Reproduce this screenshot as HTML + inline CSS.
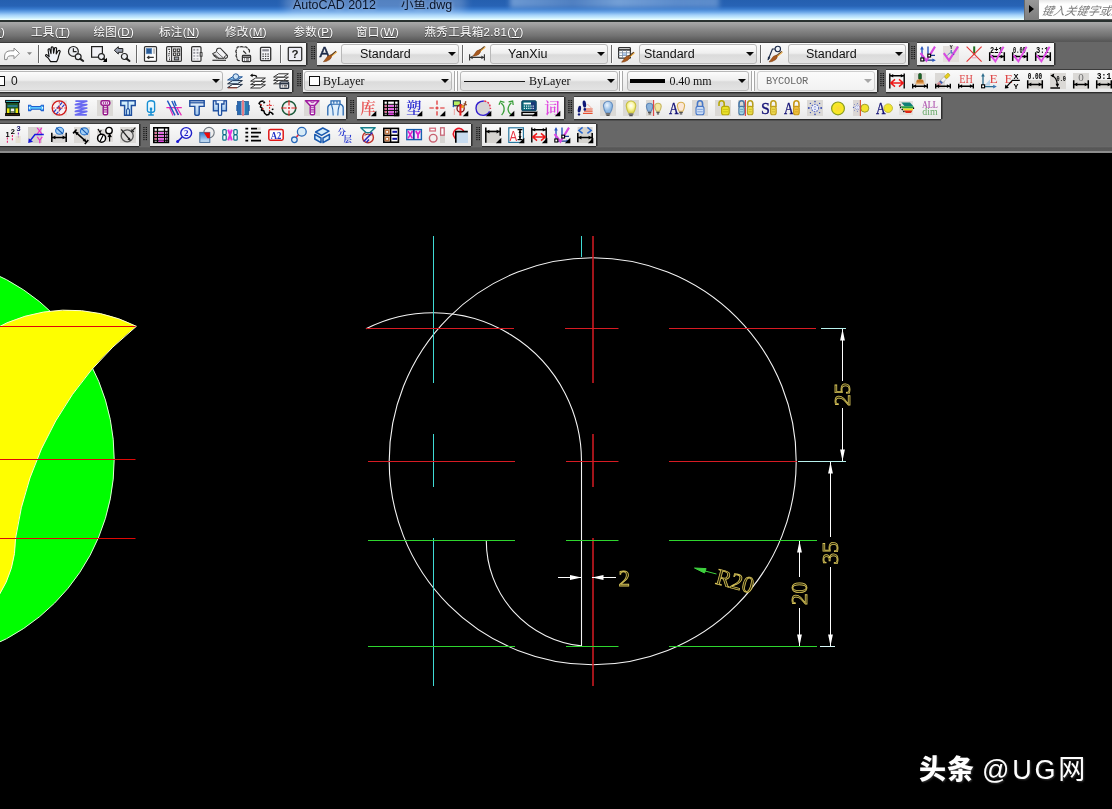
<!DOCTYPE html><html lang="zh"><head><meta charset="utf-8"><title>AutoCAD 2012 小鱼.dwg</title><style>
*{margin:0;padding:0;box-sizing:border-box}
html,body{width:1112px;height:809px;overflow:hidden;background:#000}
body{font-family:"Liberation Sans","Noto Sans CJK SC",sans-serif;position:relative}
#root{position:absolute;left:0;top:0;width:1112px;height:809px;overflow:hidden;background:#000;will-change:transform;opacity:.9999}
.abs{position:absolute}
#title{left:0;top:0;width:1112px;height:20px;overflow:hidden;background:linear-gradient(to bottom,#2560b0 0px,#2864b6 6px,#3a7ccf 9px,#6aa6e8 12px,#a4d2fa 15px,#cdf0ff 18px,#ecffff 19.6px,#c8dce0 20px)}
.tt{position:absolute;top:-3px;font-size:12.5px;color:#0a1428;white-space:nowrap;letter-spacing:-0.05px;line-height:16px;text-shadow:0 0 4px rgba(255,255,255,.55)}
#menu{left:0;top:20px;width:1112px;height:22px;background:linear-gradient(to bottom,#2a3230 0px,#2a3230 1.7px,#aaaaaa 2.2px,#9a9a9a 6px,#888 10px,#747474 15.5px,#5e5e5e 20px,#575757 21.4px,#606060 22px)}
.mi{position:absolute;top:2.5px;font-size:11.5px;letter-spacing:.32px;line-height:18px;color:#fff;white-space:nowrap;text-shadow:0 1px 1px rgba(0,0,0,.55)}
.mi u{text-decoration:underline;text-underline-offset:1px}
#tbbg{left:0;top:42px;width:1112px;height:111px;background:#686868}
.tb{position:absolute;height:22px;background:linear-gradient(to bottom,#fbfbfb,#f1f1f1 60%,#e9e9e9);box-shadow:0 1px 0 #2e2e2e,0 2px 0 #525252,0 -1px 0 #3c3c3c,1px 0 0 #303030,2px 0 0 #4a4a4a}
.grip{position:absolute;width:5px;height:14px;background-image:radial-gradient(circle at 1px 1px,#161616 0.85px,transparent 1.15px);background-size:2.5px 2px}
.sp2{position:absolute;width:4px;height:20px;border-left:1px solid #a9a9a9;border-right:1px solid #a9a9a9;background:#fff}
.sep{position:absolute;width:2px;height:18px;border-left:1px solid #6a6a6a;background:#fdfdfd}
.dd{position:absolute;height:20px;border:1px solid #b9b9b9;border-radius:3px;background:linear-gradient(to bottom,#fdfdfd 0%,#f0f0f0 45%,#dcdcdc 55%,#e4e4e4 100%);font-size:12.5px;color:#111;white-space:nowrap;overflow:hidden}
.dd .t{position:absolute;top:1px;line-height:17px}
.dd .ar{position:absolute;right:1.6px;top:6.8px;width:0;height:0;border-left:4px solid transparent;border-right:4px solid transparent;border-top:4.6px solid var(--ac,#0a0a0a)}
.mono{font-family:"Liberation Serif",serif;font-size:12px;letter-spacing:-0.1px}
.ic{position:absolute;width:16px;height:16px;overflow:visible}
</style></head><body><div id="root">
<div id="title" class="abs">
<div class="abs" style="left:510px;top:-5px;width:209px;height:13px;background:linear-gradient(to right,rgba(150,186,230,.65),rgba(110,150,205,.6) 30%,rgba(160,195,235,.65) 52%,rgba(130,170,222,.6) 80%,rgba(150,186,230,.5));filter:blur(2.5px)"></div>
<div class="abs" style="left:284px;top:-8px;width:182px;height:22px;background:rgba(255,255,255,.22);border-radius:10px;filter:blur(4px)"></div>
<span class="tt" style="left:293px">AutoCAD 2012</span>
<span class="tt" style="left:401px">小鱼.dwg</span>
<div class="abs" style="left:1024px;top:0;width:15px;height:20px;background:linear-gradient(to bottom,#9a9a9a,#7d7d7d);border-left:1px solid #6a6a6a"></div>
<div class="abs" style="left:1029px;top:5px;width:0;height:0;border-top:4px solid transparent;border-bottom:4px solid transparent;border-left:5px solid #000"></div>
<div class="abs" style="left:1039px;top:0;width:80px;height:19px;background:linear-gradient(to bottom,#e9e9e9,#fff 4px,#fff);overflow:hidden"><span style="position:absolute;left:3px;top:4px;font-size:11.5px;line-height:15px;color:#7c7c7c;font-style:italic;white-space:nowrap;transform:skewX(-12deg);display:inline-block">键入关键字或短语</span></div>
<div class="abs" style="left:1039px;top:19px;width:80px;height:1px;background:#5c5c5c"></div>
</div>
<div id="menu" class="abs">
<span class="mi" style="left:-36px">格式(<u>O</u>)</span>
<span class="mi" style="left:31px">工具(<u>T</u>)</span>
<span class="mi" style="left:93.5px">绘图(<u>D</u>)</span>
<span class="mi" style="left:159px">标注(<u>N</u>)</span>
<span class="mi" style="left:225px">修改(<u>M</u>)</span>
<span class="mi" style="left:293.5px">参数(<u>P</u>)</span>
<span class="mi" style="left:356px">窗口(<u>W</u>)</span>
<span class="mi" style="left:424.5px">燕秀工具箱2.81(<u>Y</u>)</span>
</div>
<div id="tbbg" class="abs">
<div class="abs" style="left:0;top:104px;width:1112px;height:7px;background:linear-gradient(to bottom,#6a6a6a 0,#6a6a6a 1.3px,#575757 1.6px,#5a5a5a 4.7px,#8e8e8e 5.1px,#8c8c8c 6.6px,#101010 7px)"></div>
</div>
<div class="tb" style="left:-2px;top:43px;width:308px"></div>
<svg class="abs" style="left:310.5px;top:46.4px" width="5" height="14" viewBox="0 0 5 14" fill="#141414"><rect x="0.3" y="0" width="1.25" height="1.15"/><rect x="2.7" y="0" width="1.25" height="1.15"/><rect x="0.3" y="2" width="1.25" height="1.15"/><rect x="2.7" y="2" width="1.25" height="1.15"/><rect x="0.3" y="4" width="1.25" height="1.15"/><rect x="2.7" y="4" width="1.25" height="1.15"/><rect x="0.3" y="6" width="1.25" height="1.15"/><rect x="2.7" y="6" width="1.25" height="1.15"/><rect x="0.3" y="8" width="1.25" height="1.15"/><rect x="2.7" y="8" width="1.25" height="1.15"/><rect x="0.3" y="10" width="1.25" height="1.15"/><rect x="2.7" y="10" width="1.25" height="1.15"/><rect x="0.3" y="12" width="1.25" height="1.15"/><rect x="2.7" y="12" width="1.25" height="1.15"/></svg>
<div class="tb" style="left:317px;top:43px;width:590.5px"></div>
<svg class="abs" style="left:911px;top:46.4px" width="5" height="14" viewBox="0 0 5 14" fill="#141414"><rect x="0.3" y="0" width="1.25" height="1.15"/><rect x="2.7" y="0" width="1.25" height="1.15"/><rect x="0.3" y="2" width="1.25" height="1.15"/><rect x="2.7" y="2" width="1.25" height="1.15"/><rect x="0.3" y="4" width="1.25" height="1.15"/><rect x="2.7" y="4" width="1.25" height="1.15"/><rect x="0.3" y="6" width="1.25" height="1.15"/><rect x="2.7" y="6" width="1.25" height="1.15"/><rect x="0.3" y="8" width="1.25" height="1.15"/><rect x="2.7" y="8" width="1.25" height="1.15"/><rect x="0.3" y="10" width="1.25" height="1.15"/><rect x="2.7" y="10" width="1.25" height="1.15"/><rect x="0.3" y="12" width="1.25" height="1.15"/><rect x="2.7" y="12" width="1.25" height="1.15"/></svg>
<div class="tb" style="left:917px;top:43px;width:137px"></div>
<div class="sep" style="left:38px;top:45px"></div>
<div class="sep" style="left:136px;top:45px"></div>
<div class="sep" style="left:280px;top:45px"></div>
<div class="sep" style="left:462px;top:45px"></div>
<div class="sep" style="left:611px;top:45px"></div>
<div class="sep" style="left:760px;top:45px"></div>
<div class="dd" style="left:341px;top:44px;width:118px;"><span class="t" style="left:18px">Standard</span><i class="ar"></i></div>
<div class="dd" style="left:490px;top:44px;width:118px;"><span class="t" style="left:17px">YanXiu</span><i class="ar"></i></div>
<div class="dd" style="left:639px;top:44px;width:118px;"><span class="t" style="left:4px">Standard</span><i class="ar"></i></div>
<div class="dd" style="left:788px;top:44px;width:118px;"><span class="t" style="left:17px">Standard</span><i class="ar"></i></div>
<div class="tb" style="left:-2px;top:70px;width:294px"></div>
<svg class="abs" style="left:296.5px;top:73.4px" width="5" height="14" viewBox="0 0 5 14" fill="#141414"><rect x="0.3" y="0" width="1.25" height="1.15"/><rect x="2.7" y="0" width="1.25" height="1.15"/><rect x="0.3" y="2" width="1.25" height="1.15"/><rect x="2.7" y="2" width="1.25" height="1.15"/><rect x="0.3" y="4" width="1.25" height="1.15"/><rect x="2.7" y="4" width="1.25" height="1.15"/><rect x="0.3" y="6" width="1.25" height="1.15"/><rect x="2.7" y="6" width="1.25" height="1.15"/><rect x="0.3" y="8" width="1.25" height="1.15"/><rect x="2.7" y="8" width="1.25" height="1.15"/><rect x="0.3" y="10" width="1.25" height="1.15"/><rect x="2.7" y="10" width="1.25" height="1.15"/><rect x="0.3" y="12" width="1.25" height="1.15"/><rect x="2.7" y="12" width="1.25" height="1.15"/></svg>
<div class="tb" style="left:303px;top:70px;width:573.5px"></div>
<div class="sp2" style="left:454px;top:71px"></div>
<div class="sp2" style="left:619px;top:71px"></div>
<div class="sp2" style="left:750.5px;top:71px"></div>
<svg class="abs" style="left:880px;top:73.4px" width="5" height="14" viewBox="0 0 5 14" fill="#141414"><rect x="0.3" y="0" width="1.25" height="1.15"/><rect x="2.7" y="0" width="1.25" height="1.15"/><rect x="0.3" y="2" width="1.25" height="1.15"/><rect x="2.7" y="2" width="1.25" height="1.15"/><rect x="0.3" y="4" width="1.25" height="1.15"/><rect x="2.7" y="4" width="1.25" height="1.15"/><rect x="0.3" y="6" width="1.25" height="1.15"/><rect x="2.7" y="6" width="1.25" height="1.15"/><rect x="0.3" y="8" width="1.25" height="1.15"/><rect x="2.7" y="8" width="1.25" height="1.15"/><rect x="0.3" y="10" width="1.25" height="1.15"/><rect x="2.7" y="10" width="1.25" height="1.15"/><rect x="0.3" y="12" width="1.25" height="1.15"/><rect x="2.7" y="12" width="1.25" height="1.15"/></svg>
<div class="tb" style="left:886px;top:70px;width:228px"></div>
<div class="dd" style="left:-4px;top:71px;width:227px;"><span class="abs" style="left:-2px;top:4px;width:10px;height:10px;border:1px solid #111;background:#fff"></span><span class="t" style="left:14px;font-size:12px">0</span><i class="ar"></i></div>
<div class="dd" style="left:303.5px;top:71px;width:148.0px;"><span class="abs" style="left:4.5px;top:4px;width:10.5px;height:10px;border:1px solid #111;background:#fff"></span><span class="t mono" style="left:18.5px">ByLayer</span><i class="ar"></i></div>
<div class="dd" style="left:460px;top:71px;width:157.5px;"><span class="abs" style="left:3px;top:8.8px;width:60.5px;height:1.4px;background:#1a1a1a"></span><span class="t mono" style="left:68px">ByLayer</span><i class="ar"></i></div>
<div class="dd" style="left:626.5px;top:71px;width:122.0px;"><span class="abs" style="left:2.5px;top:7px;width:35px;height:4px;background:#000"></span><span class="t mono" style="left:42px">0.40 mm</span><i class="ar"></i></div>
<div class="dd" style="left:757px;top:71px;width:118px;background:linear-gradient(to bottom,#fcfcfc,#f3f3f3);border-color:#cfcfcf;--ac:#a8a8a8"><span class="t" style="left:8px;color:#6a6a6a;font-family:Liberation Mono,monospace;font-size:10.4px;letter-spacing:-0.25px">BYCOLOR</span><i class="ar"></i></div>
<div class="tb" style="left:-2px;top:96.5px;width:348px"></div>
<svg class="abs" style="left:350px;top:99.9px" width="5" height="14" viewBox="0 0 5 14" fill="#141414"><rect x="0.3" y="0" width="1.25" height="1.15"/><rect x="2.7" y="0" width="1.25" height="1.15"/><rect x="0.3" y="2" width="1.25" height="1.15"/><rect x="2.7" y="2" width="1.25" height="1.15"/><rect x="0.3" y="4" width="1.25" height="1.15"/><rect x="2.7" y="4" width="1.25" height="1.15"/><rect x="0.3" y="6" width="1.25" height="1.15"/><rect x="2.7" y="6" width="1.25" height="1.15"/><rect x="0.3" y="8" width="1.25" height="1.15"/><rect x="2.7" y="8" width="1.25" height="1.15"/><rect x="0.3" y="10" width="1.25" height="1.15"/><rect x="2.7" y="10" width="1.25" height="1.15"/><rect x="0.3" y="12" width="1.25" height="1.15"/><rect x="2.7" y="12" width="1.25" height="1.15"/></svg>
<div class="tb" style="left:357px;top:96.5px;width:206.5px"></div>
<svg class="abs" style="left:567.5px;top:99.9px" width="5" height="14" viewBox="0 0 5 14" fill="#141414"><rect x="0.3" y="0" width="1.25" height="1.15"/><rect x="2.7" y="0" width="1.25" height="1.15"/><rect x="0.3" y="2" width="1.25" height="1.15"/><rect x="2.7" y="2" width="1.25" height="1.15"/><rect x="0.3" y="4" width="1.25" height="1.15"/><rect x="2.7" y="4" width="1.25" height="1.15"/><rect x="0.3" y="6" width="1.25" height="1.15"/><rect x="2.7" y="6" width="1.25" height="1.15"/><rect x="0.3" y="8" width="1.25" height="1.15"/><rect x="2.7" y="8" width="1.25" height="1.15"/><rect x="0.3" y="10" width="1.25" height="1.15"/><rect x="2.7" y="10" width="1.25" height="1.15"/><rect x="0.3" y="12" width="1.25" height="1.15"/><rect x="2.7" y="12" width="1.25" height="1.15"/></svg>
<div class="tb" style="left:574px;top:96.5px;width:367px"></div>
<div class="tb" style="left:-2px;top:123.5px;width:140.5px"></div>
<svg class="abs" style="left:143px;top:126.9px" width="5" height="14" viewBox="0 0 5 14" fill="#141414"><rect x="0.3" y="0" width="1.25" height="1.15"/><rect x="2.7" y="0" width="1.25" height="1.15"/><rect x="0.3" y="2" width="1.25" height="1.15"/><rect x="2.7" y="2" width="1.25" height="1.15"/><rect x="0.3" y="4" width="1.25" height="1.15"/><rect x="2.7" y="4" width="1.25" height="1.15"/><rect x="0.3" y="6" width="1.25" height="1.15"/><rect x="2.7" y="6" width="1.25" height="1.15"/><rect x="0.3" y="8" width="1.25" height="1.15"/><rect x="2.7" y="8" width="1.25" height="1.15"/><rect x="0.3" y="10" width="1.25" height="1.15"/><rect x="2.7" y="10" width="1.25" height="1.15"/><rect x="0.3" y="12" width="1.25" height="1.15"/><rect x="2.7" y="12" width="1.25" height="1.15"/></svg>
<div class="tb" style="left:150px;top:123.5px;width:321px"></div>
<svg class="abs" style="left:475.5px;top:126.9px" width="5" height="14" viewBox="0 0 5 14" fill="#141414"><rect x="0.3" y="0" width="1.25" height="1.15"/><rect x="2.7" y="0" width="1.25" height="1.15"/><rect x="0.3" y="2" width="1.25" height="1.15"/><rect x="2.7" y="2" width="1.25" height="1.15"/><rect x="0.3" y="4" width="1.25" height="1.15"/><rect x="2.7" y="4" width="1.25" height="1.15"/><rect x="0.3" y="6" width="1.25" height="1.15"/><rect x="2.7" y="6" width="1.25" height="1.15"/><rect x="0.3" y="8" width="1.25" height="1.15"/><rect x="2.7" y="8" width="1.25" height="1.15"/><rect x="0.3" y="10" width="1.25" height="1.15"/><rect x="2.7" y="10" width="1.25" height="1.15"/><rect x="0.3" y="12" width="1.25" height="1.15"/><rect x="2.7" y="12" width="1.25" height="1.15"/></svg>
<div class="tb" style="left:482px;top:123.5px;width:114px"></div>
<svg class="ic" style="left:3.5px;top:46px" viewBox="0 0 16 16"><path d="M15.4 7.3L10 2V4.8H6.5Q0.8 5 0.6 10V13.6H3L3.4 11.5Q4 9.8 6.5 9.8H10V12.7Z" fill="#fff" stroke="#8a8a8a" stroke-width="1" stroke-linejoin="round"/></svg>
<svg class="ic" style="left:27px;top:46px" viewBox="0 0 16 16"><path d="M0 6.2h5l-2.5 2.9z" fill="#8a8a8a"/></svg>
<svg class="ic" style="left:45px;top:46px" viewBox="0 0 16 16"><path d="M5.6 15.6L3.2 12 0.6 9.9Q0.2 8.5 1.7 8.6L4.1 10.6 3.1 4Q3.3 2.4 4.7 2.9L6 7.6 6.2 1.7Q7 0.2 8.2 1.3L8.6 7.1 9.6 2Q10.6 0.9 11.6 2.1L11.2 7.9 13.2 4.8Q14.4 4 15.2 5.2L13.6 10.2Q13.2 13.2 11.6 15.6Z" fill="#f2f4fa" stroke="#111" stroke-width="1.15" stroke-linejoin="round"/></svg>
<svg class="ic" style="left:68px;top:46px" viewBox="0 0 16 16"><circle cx="5.4" cy="5.4" r="4.9" fill="#eceef2" stroke="#222" stroke-width="1.2"/><path d="M5.4 2.3V5.6H8.6" stroke="#222" stroke-width="1.2" fill="none"/><circle cx="10.2" cy="10.8" r="2.9" fill="#eef0f4" stroke="#222" stroke-width="1.2"/><path d="M12.229999999999999 12.83L15.2 15" stroke="#222" stroke-width="2" stroke-linecap="round"/></svg>
<svg class="ic" style="left:91px;top:46px" viewBox="0 0 16 16"><rect x="0.6" y="0.6" width="10.8" height="10.6" fill="#f2f2f6" stroke="#222" stroke-width="1.2"/><circle cx="10.4" cy="10.6" r="3" fill="#eef0f4" stroke="#222" stroke-width="1.2"/><path d="M12.5 12.7L14 14" stroke="#222" stroke-width="2" stroke-linecap="round"/><path d="M16 11.8v4.2h-4.2z" fill="#000"/></svg>
<svg class="ic" style="left:114px;top:46px" viewBox="0 0 16 16"><path d="M0.3 4.3L4.3 0.7V2.5H8.8V6.3H4.3V8Z" fill="#9aa0b0" stroke="#222" stroke-width="1" stroke-linejoin="round"/><circle cx="10.4" cy="10.5" r="3" fill="#eef0f4" stroke="#222" stroke-width="1.2"/><path d="M12.5 12.6L15.5 15" stroke="#222" stroke-width="2" stroke-linecap="round"/></svg>
<svg class="ic" style="left:143px;top:46px" viewBox="0 0 16 16"><rect x="1.5" y="0.6" width="12" height="14.8" rx="1" fill="#fff" stroke="#333" stroke-width="1.2"/><rect x="3.2" y="2.4" width="5.6" height="5.4" fill="#2a5c98" stroke="#5f8cc0" stroke-width=".6"/><rect x="10.3" y="2.4" width="1.5" height="5.4" fill="#b0b0b0"/><path d="M4.6 11.4H10.8M6.3 9.9L4.4 11.4 6.3 12.9" stroke="#333" stroke-width="1.1" fill="none"/></svg>
<svg class="ic" style="left:166px;top:46px" viewBox="0 0 16 16"><rect x="0.6" y="0.6" width="14.8" height="14.8" rx="1.2" fill="#f4f4f6" stroke="#333" stroke-width="1.2"/><path d="M5.6 0.6V15.4" stroke="#333" stroke-width="1.1"/><path d="M2.3 3.4h1.6M3 5.6h.9M2.3 7.8h1.6M2.3 9.8h1.2M3 12h.9M3 13.6h.9" stroke="#333" stroke-width="1.1"/><g fill="#fff" stroke="#333" stroke-width="1"><rect x="7.4" y="3" width="2.4" height="2.4"/><rect x="11.3" y="3" width="2.4" height="2.4"/><rect x="7.4" y="7" width="2.4" height="2.4"/><rect x="11.3" y="7" width="2.4" height="2.4"/></g><rect x="8.3" y="11" width="4.4" height="2.9" fill="#9aa0aa" stroke="#333" stroke-width="1"/></svg>
<svg class="ic" style="left:189px;top:46px" viewBox="0 0 16 16"><rect x="2.6" y="0.6" width="9.4" height="14.8" rx="1.2" fill="#f6f6f8" stroke="#333" stroke-width="1.2"/><rect x="11.2" y="6.6" width="1.8" height="3.6" fill="#fff" stroke="#333" stroke-width="1"/><g fill="#9a9aa2"><rect x="4.3" y="2.8" width="1.9" height="1.9"/><rect x="7.6" y="2.8" width="1.9" height="1.9"/><rect x="4.3" y="5.9" width="1.9" height="1.9"/><rect x="7.6" y="5.9" width="1.9" height="1.9"/><rect x="4.3" y="9" width="1.9" height="1.9" opacity=".7"/><rect x="7.6" y="9" width="1.9" height="1.9" opacity=".7"/><rect x="4.3" y="12" width="1.9" height="1.7" opacity=".5"/><rect x="7.6" y="12" width="1.9" height="1.7" opacity=".5"/></g></svg>
<svg class="ic" style="left:212px;top:46px" viewBox="0 0 16 16"><path d="M0.4 7.8L4.6 5.6 12 12.3H6Z" fill="#e8e8ea" stroke="#333" stroke-width="1"/><path d="M4.6 5.4Q4.2 2.4 6.8 2.2H8.4L15.4 9.6Q16 12.4 12.8 12.4" fill="#f4f4f6" stroke="#333" stroke-width="1.1"/><path d="M1.2 9.4L5 12.4M2.6 8.4L7 12.4M12.4 12.4Q11.6 10 14.6 9.4" stroke="#333" stroke-width=".9" fill="none"/><path d="M0.4 14.3H14" stroke="#333" stroke-width="1.2"/></svg>
<svg class="ic" style="left:235px;top:46px" viewBox="0 0 16 16"><path d="M2 2.2Q2 .6 4 .8M5.6 .8Q7 .2 8.2 1M9.8 1Q11.6 .4 12.2 2M13.4 3.2Q15 4 14.4 6M1.4 4Q.2 5.4 1.4 7M1.4 8.6Q.4 10 1.8 11.2M2 12.8Q2.2 14.8 4.2 14.6M8.600000000000001 5.2L10.8 7.4" stroke="#333" stroke-width="1.3" fill="none" stroke-linecap="round"/><rect x="7.4" y="9.4" width="8.2" height="6.2" rx=".8" fill="#f0f0f4" stroke="#333" stroke-width="1.2"/><path d="M7.4 11.2H15.6" stroke="#333" stroke-width="1.4"/><path d="M9 12.8h1M11 12.8h3M9 14.2h1M11 14.2h3" stroke="#555" stroke-width=".9"/></svg>
<svg class="ic" style="left:258px;top:46px" viewBox="0 0 16 16"><rect x="2.5" y="1.4" width="10.2" height="13.2" rx="1" fill="#f8f8fa" stroke="#333" stroke-width="1.3"/><rect x="4.3" y="3.2" width="6.6" height="2.2" fill="#8a8a92"/><g fill="#444"><rect x="4.4" y="7.4" width="1.4" height="1.3"/><rect x="6.9" y="7.4" width="1.4" height="1.3"/><rect x="9.4" y="7.4" width="1.4" height="1.3"/><rect x="4.4" y="9.7" width="1.4" height="1.3"/><rect x="6.9" y="9.7" width="1.4" height="1.3"/><rect x="9.4" y="9.7" width="1.4" height="1.3"/><rect x="4.4" y="12" width="1.4" height="1.3"/><rect x="6.9" y="12" width="1.4" height="1.3"/><rect x="9.4" y="12" width="1.4" height="1.3"/></g></svg>
<svg class="ic" style="left:287px;top:46px" viewBox="0 0 16 16"><rect x="1.3" y="1.4" width="13.4" height="13.2" rx=".8" fill="#ededf5" stroke="#333" stroke-width="1.3"/><text x="8" y="12.4" font-size="11.5" fill="#1c1c1c" font-family="Liberation Sans,sans-serif" font-weight="bold" text-anchor="middle">?</text></svg>
<svg class="ic" style="left:319px;top:46px" viewBox="0 0 16 16"><text x="0.4" y="11" font-size="15" fill="#1c2a48" font-family="Liberation Sans,sans-serif" stroke="#1c2a48" stroke-width=".5">A</text><path d="M17 5.2L11.0 10.2" stroke="#5a3a1a" stroke-width="1.2"/><path d="M17.9 5.9L11.9 10.899999999999999" stroke="#f0a020" stroke-width="1"/><path d="M12.0 8.799999999999999Q13.4 11.6 10.8 13.6Q7 16.0 4.4 15.799999999999999Q6.6 13.0 8.8 10.0Z" fill="#a85a20" stroke="#7a3c10" stroke-width=".5"/></svg>
<svg class="ic" style="left:469px;top:46px" viewBox="0 0 16 16"><path d="M0.6 8.2V14.600000000000001M15.4 8.2V14.600000000000001M0.6 11.4H15.4" stroke="#333" stroke-width="1.1" fill="none"/><path d="M1.0 11.4l2.6 -1.9v3.8zM15.0 11.4l-2.6 -1.9v3.8z" fill="#333"/><path d="M15.6 0.4L10.0 5.0" stroke="#5a3a1a" stroke-width="1.2"/><path d="M16.5 1.1L10.9 5.7" stroke="#f0a020" stroke-width="1"/><path d="M11.0 3.6Q12.4 6.4 9.8 8.4Q6.4 10.4 3.8000000000000003 10.2Q6.0 7.3999999999999995 7.8 4.8Z" fill="#a85a20" stroke="#7a3c10" stroke-width=".5"/></svg>
<svg class="ic" style="left:618px;top:46px" viewBox="0 0 16 16"><rect x="0.6" y="1.6" width="11.8" height="10.6" rx=".8" fill="#fff" stroke="#333" stroke-width="1.2"/><path d="M0.6 3.9H12.4" stroke="#333" stroke-width="1.6"/><path d="M4.5 4V12M8.5 4V12M0.6 6.8H12.4M0.6 9.5H12.4" stroke="#7a8aa0" stroke-width=".8"/><rect x="4.9" y="7.2" width="3.2" height="2" fill="#a8c8f0"/><path d="M15.8 6.2L10.0 10.9" stroke="#5a3a1a" stroke-width="1.2"/><path d="M16.7 6.9L10.9 11.6" stroke="#f0a020" stroke-width="1"/><path d="M11.0 9.5Q12.4 12.3 9.8 14.3Q6.2 16.4 3.6 16.2Q5.800000000000001 13.399999999999999 7.8 10.700000000000001Z" fill="#a85a20" stroke="#7a3c10" stroke-width=".5"/></svg>
<svg class="ic" style="left:767px;top:46px" viewBox="0 0 16 16"><path d="M8.2 3H5.4L1.2 13.6" stroke="#1c2a48" stroke-width="1.2" fill="none"/><path d="M0.6 14.6L1 10.4 3.4 11.8Z" fill="#1c2a48"/><circle cx="10.8" cy="3" r="2.7" fill="#f0f4fa" stroke="#1c2a48" stroke-width="1.1"/><path d="M14.8 5.4L8.700000000000001 10.4" stroke="#5a3a1a" stroke-width="1.2"/><path d="M15.700000000000001 6.1000000000000005L9.600000000000001 11.1" stroke="#f0a020" stroke-width="1"/><path d="M9.700000000000001 9.0Q11.100000000000001 11.8 8.500000000000002 13.8Q4.6 16.2 2.0 16.0Q4.2 13.2 6.500000000000001 10.200000000000001Z" fill="#a85a20" stroke="#7a3c10" stroke-width=".5"/></svg>
<svg class="ic" style="left:920px;top:46px" viewBox="0 0 16 16"><path d="M2 14.2V1.6M8 8V0.5" stroke="#2c58c0" stroke-width="1.4"/><path d="M2 0L0.2 3.4H3.8Z" fill="#2c58c0"/><path d="M2 14.2H14M8 9.4H15" stroke="#1c3c90" stroke-width="1.2"/><path d="M15.8 14.2L12.4 12.4V16Z" fill="#2c58c0"/><path d="M0.6 7L6.4 14.6 15 0.6" stroke="#d84ae2" stroke-width="2.1" fill="none"/><rect x="0.8" y="12" width="3" height="3" fill="#fff" stroke="#000" stroke-width="1.1"/><rect x="7.8" y="8.200000000000001" width="2.8" height="2.8" fill="#fff" stroke="#000" stroke-width="1.1"/></svg>
<svg class="ic" style="left:943px;top:46px" viewBox="0 0 16 16"><rect x="0" y="0" width="16" height="16" fill="#e4e0dd"/><path d="M0.8 7.2L6 14.4 15 0.6" stroke="#d84ae2" stroke-width="2.1" fill="none"/><path d="M8.2 4V8M4.4 9.4L8.2 5.4 11 8.8" stroke="#2050b0" stroke-width="1" stroke-dasharray="1.4 .8" fill="none"/><text x="6.4" y="3.4" font-size="5" fill="#000" font-family="Liberation Sans,sans-serif" font-weight="bold">Y</text></svg>
<svg class="ic" style="left:966px;top:46px" viewBox="0 0 16 16"><path d="M8.2 0.4V9" stroke="#207020" stroke-width="2"/><path d="M0.6 0.6L15.6 15.6M15.6 0.6L0.6 15.6" stroke="#e63a3a" stroke-width="1.15"/><path d="M5.5 11.8H10.5" stroke="#e890b0" stroke-width=".8"/></svg>
<svg class="ic" style="left:989px;top:46px" viewBox="0 0 16 16"><path d="M0.7 6.199999999999999V15.0M15.3 6.199999999999999V15.0M0.7 10.6H15.3" stroke="#000" stroke-width="1.5" fill="none"/><path d="M1.1 10.6l3.2 -1.9v3.8zM14.9 10.6l-3.2 -1.9v3.8z" fill="#000"/><text x="7.4" y="6.6" font-size="9.4" fill="#000" font-family="Liberation Mono,monospace" font-weight="bold" text-anchor="middle" textLength="12.6" lengthAdjust="spacingAndGlyphs">2±1</text><path d="M1.6 9.2L6.4 15.4 14.6 0.8" stroke="#e04ce6" stroke-width="1.9" fill="none"/></svg>
<svg class="ic" style="left:1012px;top:46px" viewBox="0 0 16 16"><path d="M0.7 6.199999999999999V15.0M15.3 6.199999999999999V15.0M0.7 10.6H15.3" stroke="#000" stroke-width="1.5" fill="none"/><path d="M1.1 10.6l3.2 -1.9v3.8zM14.9 10.6l-3.2 -1.9v3.8z" fill="#000"/><text x="7.4" y="6.6" font-size="9.4" fill="#000" font-family="Liberation Mono,monospace" font-weight="bold" text-anchor="middle" textLength="12.6" lengthAdjust="spacingAndGlyphs">0.00</text><path d="M1.6 9.2L6.4 15.4 14.6 0.8" stroke="#e04ce6" stroke-width="1.9" fill="none"/></svg>
<svg class="ic" style="left:1035px;top:46px" viewBox="0 0 16 16"><path d="M0.7 6.199999999999999V15.0M15.3 6.199999999999999V15.0M0.7 10.6H15.3" stroke="#000" stroke-width="1.5" fill="none"/><path d="M1.1 10.6l3.2 -1.9v3.8zM14.9 10.6l-3.2 -1.9v3.8z" fill="#000"/><text x="7.4" y="6.6" font-size="9.4" fill="#000" font-family="Liberation Mono,monospace" font-weight="bold" text-anchor="middle" textLength="12.6" lengthAdjust="spacingAndGlyphs">3:1</text><path d="M1.6 9.2L6.4 15.4 14.6 0.8" stroke="#e04ce6" stroke-width="1.9" fill="none"/></svg>
<svg class="ic" style="left:227px;top:73px" viewBox="0 0 16 16"><path d="M0.6 14.600000000000001L5.6 11.4H15.4L10.4 14.600000000000001Z" fill="#fff" stroke="#1a2a40" stroke-width="1"/><path d="M1 14.9H10" stroke="#c04020" stroke-width=".8"/><path d="M0.6 10.8L5.6 7.6H15.4L10.4 10.8Z" fill="#d8ecfa" stroke="#1a2a40" stroke-width="1"/><path d="M0.6 7.0L5.6 3.8H15.4L10.4 7.0Z" fill="#8cc4ee" stroke="#2a5a98" stroke-width="1"/><circle cx="8.8" cy="3.6" r="2.8" fill="#cfe6f8" stroke="#2a5a98" stroke-width="1"/></svg>
<svg class="ic" style="left:250px;top:73px" viewBox="0 0 16 16"><path d="M0.6 15.0L5.6 11.8H15.4L10.4 15.0Z" fill="#fff" stroke="#333" stroke-width="1"/><path d="M0.6 11.600000000000001L5.6 8.4H15.4L10.4 11.600000000000001Z" fill="#fff" stroke="#333" stroke-width="1"/><path d="M0.6 8.2L5.6 5H15.4L10.4 8.2Z" fill="#fff" stroke="#333" stroke-width="1"/><path d="M1.2 2.4H4.4Q6.6 2.4 6.8 4.4" stroke="#111" stroke-width="1.1" fill="none"/><path d="M0 2.4L2.6 0.6V4.2Z" fill="#111"/></svg>
<svg class="ic" style="left:273px;top:73px" viewBox="0 0 16 16"><path d="M0.6 10.8L5.6 7.6H15.4L10.4 10.8Z" fill="#fff" stroke="#333" stroke-width="1"/><path d="M0.6 7.4L5.6 4.2H15.4L10.4 7.4Z" fill="#fff" stroke="#333" stroke-width="1"/><path d="M0.6 4.0L5.6 0.8H15.4L10.4 4.0Z" fill="#fff" stroke="#333" stroke-width="1"/><rect x="7" y="8.8" width="8.6" height="6.6" rx="1" fill="#f4f4f8" stroke="#2a3444" stroke-width="1.3"/><path d="M7 10.7H15.6" stroke="#2a3444" stroke-width="1.5"/><path d="M8.8 12.4h1M10.8 12.4h3.200000000000001M8.8 13.9h1M10.8 13.9h3.2" stroke="#555" stroke-width=".9"/></svg>
<svg class="ic" style="left:889px;top:73px" viewBox="0 0 16 16"><path d="M0.8 0.6V15.4M15.2 0.6V15.4M0.8 2.8H15.2" stroke="#000" stroke-width="1.4" fill="none"/><path d="M1.2 2.8l3-1.7v3.4zM14.8 2.8l-3-1.7v3.4z" fill="#000"/><path d="M2.4 10H13.6M6 6.4L1.8 10 6 13.6M10 6.4L14.2 10 10 13.6" stroke="#f01818" stroke-width="1.5" fill="none"/></svg>
<svg class="ic" style="left:912px;top:73px" viewBox="0 0 16 16"><rect x="2" y="0" width="12" height="11" fill="#e2e0dc"/><rect x="6.6" y="0.4" width="2.8" height="6" rx="1.2" fill="#1e6a2a" stroke="#0f3c18" stroke-width=".6"/><path d="M4.4 8.6Q4.4 6.2 8 6.2Q11.6 6.2 11.6 8.6V10H4.4Z" fill="#c87828"/><rect x="3.6" y="9.6" width="8.8" height="1.8" fill="#e8b070"/><path d="M0.7 10.799999999999999V15.6M15.3 10.799999999999999V15.6M0.7 13.2H15.3" stroke="#000" stroke-width="1.4" fill="none"/><path d="M1.1 13.2l3 -1.9v3.8zM14.9 13.2l-3 -1.9v3.8z" fill="#000"/></svg>
<svg class="ic" style="left:935px;top:73px" viewBox="0 0 16 16"><rect x="0" y="0" width="10" height="16" fill="#dcdad7"/><g transform="rotate(-45 8 7)"><rect x="0.6" y="5.4" width="3.6" height="3.4" fill="#d08890"/><rect x="4.2" y="5.4" width="2" height="3.4" fill="#3a5ab0"/><rect x="6.2" y="5.4" width="5" height="3.4" fill="#f4f4f4" stroke="#888" stroke-width=".4"/><rect x="11.2" y="5.4" width="5.4" height="3.4" rx="1.6" fill="#e8d020" stroke="#a09010" stroke-width=".5"/></g><path d="M0.7 10.799999999999999V15.6M15.3 10.799999999999999V15.6M0.7 13.2H15.3" stroke="#000" stroke-width="1.4" fill="none"/><path d="M1.1 13.2l3 -1.9v3.8zM14.9 13.2l-3 -1.9v3.8z" fill="#000"/></svg>
<svg class="ic" style="left:958px;top:73px" viewBox="0 0 16 16"><text x="8" y="10.2" font-size="13.5" fill="#e04848" font-family="Liberation Serif,serif" text-anchor="middle" textLength="13.6" lengthAdjust="spacingAndGlyphs">EH</text><path d="M0.7 10.799999999999999V15.6M15.3 10.799999999999999V15.6M0.7 13.2H15.3" stroke="#000" stroke-width="1.4" fill="none"/><path d="M1.1 13.2l3 -1.9v3.8zM14.9 13.2l-3 -1.9v3.8z" fill="#000"/></svg>
<svg class="ic" style="left:981px;top:73px" viewBox="0 0 16 16"><path d="M2 13V2M2 13.6H13" stroke="#2c6c8c" stroke-width="1.3"/><path d="M2 0L0.2 3.6H3.8Z" fill="#2c6c8c"/><path d="M15.8 13.6L12.2 11.8V15.4Z" fill="#3a78b8"/><path d="M3.4 12.6L9 6.4V12.6Z" fill="#b8d4ec"/><rect x="0.6" y="11.8" width="3" height="3" fill="#fff" stroke="#000" stroke-width="1.1"/><text x="8.6" y="10" font-size="13.5" fill="#e04848" font-family="Liberation Serif,serif">E</text></svg>
<svg class="ic" style="left:1004px;top:73px" viewBox="0 0 16 16"><text x="0.4" y="10.4" font-size="13.5" fill="#e04848" font-family="Liberation Serif,serif">E</text><text x="9.4" y="5.6" font-size="7.5" fill="#000" font-family="Liberation Sans,sans-serif" font-weight="bold">X</text><text x="9.6" y="15.6" font-size="7.5" fill="#000" font-family="Liberation Sans,sans-serif" font-weight="bold">Y</text><path d="M15.8 7.4H8.4L2 14.400000000000002" stroke="#000" stroke-width="1.3" fill="none"/><path d="M0.8 15.600000000000001L1.4 11.4 5 15Z" fill="#000"/></svg>
<svg class="ic" style="left:1027px;top:73px" viewBox="0 0 16 16"><rect x="1" y="7" width="14" height="8.6" fill="#d8d6d2"/><text x="8" y="6.4" font-size="8.8" fill="#000" font-family="Liberation Mono,monospace" font-weight="bold" text-anchor="middle" textLength="14.4" lengthAdjust="spacingAndGlyphs">0.00</text><path d="M0.7 7.2V15.600000000000001M15.3 7.2V15.600000000000001M0.7 11.4H15.3" stroke="#000" stroke-width="1.5" fill="none"/><path d="M1.1 11.4l3.2 -1.9v3.8zM14.9 11.4l-3.2 -1.9v3.8z" fill="#000"/></svg>
<svg class="ic" style="left:1050px;top:73px" viewBox="0 0 16 16"><rect x="0" y="0" width="16" height="16" fill="#dcdad7"/><path d="M2.4 2.8Q7 5 7.4 12.4" stroke="#000" stroke-width="1.2" fill="none"/><path d="M0.4 2.6L4.2 0.4 3.4 4.6Z" fill="#000"/><path d="M7.4 14.4L5.6 10.8H9.2Z" fill="#000"/><path d="M0.4 15H10" stroke="#000" stroke-width="1.4"/><text x="6.6" y="8" font-size="6.8" fill="#000" font-family="Liberation Mono,monospace" font-weight="bold" textLength="9.4" lengthAdjust="spacingAndGlyphs">0.0</text></svg>
<svg class="ic" style="left:1073px;top:73px" viewBox="0 0 16 16"><rect x="0" y="0" width="16" height="16" fill="#dcdad7"/><text x="8" y="8" font-size="11" fill="#707070" font-family="Liberation Serif,serif" text-anchor="middle">0</text><path d="M0.7 7.2V15.600000000000001M15.3 7.2V15.600000000000001M0.7 11.4H15.3" stroke="#000" stroke-width="1.5" fill="none"/><path d="M1.1 11.4l3.2 -1.9v3.8zM14.9 11.4l-3.2 -1.9v3.8z" fill="#000"/></svg>
<svg class="ic" style="left:1096px;top:73px" viewBox="0 0 16 16"><rect x="1" y="7" width="14" height="8.6" fill="#d8d6d2"/><text x="8" y="6.4" font-size="9.6" fill="#000" font-family="Liberation Mono,monospace" font-weight="bold" text-anchor="middle" textLength="14.4" lengthAdjust="spacingAndGlyphs">3:1</text><path d="M0.7 7.2V15.600000000000001M15.3 7.2V15.600000000000001M0.7 11.4H15.3" stroke="#000" stroke-width="1.5" fill="none"/><path d="M1.1 11.4l3.2 -1.9v3.8zM14.9 11.4l-3.2 -1.9v3.8z" fill="#000"/></svg>
<svg class="ic" style="left:5px;top:100px" viewBox="0 0 16 16"><rect x="0.6" y="0.4" width="13.8" height="2" fill="#38b8c8" stroke="#000" stroke-width=".9"/><rect x="1.2" y="2.6" width="12.6" height="11" fill="#1e5a28" stroke="#000" stroke-width=".9"/><rect x="2.6" y="5.2" width="9.8" height="1.6" fill="#2a80a0"/><rect x="2" y="8.4" width="2.4" height="5" fill="#f0e810"/><rect x="10.6" y="8.4" width="2.4" height="5" fill="#f0e810"/><rect x="5.8" y="8.6" width="3.4" height="2.6" fill="#f4f4f4"/><rect x="5.8" y="11.2" width="3.4" height="2" fill="#8a8a70"/><rect x="0.6" y="13.6" width="13.8" height="2" fill="#3a2a10" stroke="#000" stroke-width=".9"/></svg>
<svg class="ic" style="left:28px;top:100px" viewBox="0 0 16 16"><path d="M0.6 5.2H2.6L3.6 6.5H12.4L13.4 5.2H15.4V10.6H13.4L12.4 9.3H3.6L2.6 10.6H0.6Z" fill="#58c4fc" stroke="#2060d0" stroke-width="1.1"/><path d="M0.8 7.9H2M14 7.9H15.2" stroke="#e8f8ff" stroke-width="1.6"/></svg>
<svg class="ic" style="left:51px;top:100px" viewBox="0 0 16 16"><rect x="0.6" y="0.4" width="15.4" height="15.4" fill="#e6e2e0"/><circle cx="8.3" cy="8" r="7.1" fill="#f8f0f2" stroke="#d01818" stroke-width="1.3"/><path d="M3 12L11.5 2M5.2 14.2L13.8 4.2" stroke="#2840c8" stroke-width="1.2" stroke-dasharray="3.4 1.2"/><path d="M8.3 1V15M1.2 8H15.4" stroke="#e03030" stroke-width=".8" stroke-dasharray="2.6 1.4"/><circle cx="8.3" cy="8" r="1.1" fill="#e01818"/></svg>
<svg class="ic" style="left:73px;top:100px" viewBox="0 0 16 16"><path d="M2.4 1.2H13.8L2.4 4.6H13.8L2.4 8H13.8L2.4 11.4H13.8L2.4 14.8H13.8" stroke="#6a6af2" stroke-width="1.7" fill="none" stroke-linejoin="round"/></svg>
<svg class="ic" style="left:97px;top:100px" viewBox="0 0 16 16"><rect x="0" y="0" width="16" height="16" fill="#dcdad7"/><rect x="4" y="0.8" width="8.8" height="4.4" rx="1.6" fill="#f4e4f4" stroke="#98188c" stroke-width="1.5"/><path d="M6.4 2.2v1.6M8.4 2.2v1.6M10.4 2.2v1.6" stroke="#98188c" stroke-width="1"/><rect x="6.2" y="5.6" width="4.4" height="9.2" rx="1.4" fill="#fff" stroke="#98188c" stroke-width="1.4"/><path d="M6.4 7.8h4M6.4 9.9h4M6.4 12h4" stroke="#98188c" stroke-width="1.1"/></svg>
<svg class="ic" style="left:120px;top:100px" viewBox="0 0 16 16"><path d="M0.8 0.8H15.200000000000001V5.4H11.4V15.2H4.6V5.4H0.8Z" fill="#d4f0fe" stroke="#1f4f9f" stroke-width="1.5"/><path d="M8 1V8M6.6 15V10L8 8L9.4 10V15" stroke="#1f4f9f" stroke-width="1.1" fill="none"/></svg>
<svg class="ic" style="left:143px;top:100px" viewBox="0 0 16 16"><path d="M4.4 10.6V3.4Q4.4 0.8 8 0.8Q11.6 0.8 11.6 3.4V10.6Q11.6 12 10 12.2H6Q4.4 12 4.4 10.6Z" fill="#eefaff" stroke="#1890d4" stroke-width="1.4"/><path d="M8 8V14.4M5.2 15H10.8" stroke="#1890d4" stroke-width="1.5"/><rect x="6.8" y="7.6" width="2.4" height="2.6" fill="#1890d4"/></svg>
<svg class="ic" style="left:166px;top:100px" viewBox="0 0 16 16"><path d="M0.4 7.6H15.8M3.6 7.8L7 15.6M11 7.8L15.4 15.4M8.6 7.8L12 15" stroke="#e828b8" stroke-width="1.2"/><path d="M1.4 0.6L9 15.4M5.8 1L12.6 15M8.200000000000001 0.8L10.2 6" stroke="#1f58c0" stroke-width="1.4"/></svg>
<svg class="ic" style="left:189px;top:100px" viewBox="0 0 16 16"><defs><linearGradient id="gb" x1="0" y1="0" x2="0" y2="1"><stop offset="0" stop-color="#f2f8ff"/><stop offset="1" stop-color="#9cc4ec"/></linearGradient></defs><path d="M0.8 0.8H15.2V6.4H10.2V14Q10.2 15.4 8 15.4Q5.8 15.4 5.8 14V6.4H0.8Z" fill="url(#gb)" stroke="#1f4f9f" stroke-width="1.4"/><path d="M0.8 2.8H15.2" stroke="#1f4f9f" stroke-width="1.2"/></svg>
<svg class="ic" style="left:212px;top:100px" viewBox="0 0 16 16"><defs><linearGradient id="gb2" x1="0" y1="0" x2="0" y2="1"><stop offset="0" stop-color="#f2f8ff"/><stop offset="1" stop-color="#9cc4ec"/></linearGradient></defs><rect x="1.4" y="0.8" width="13" height="10" fill="url(#gb2)" stroke="#1f4f9f" stroke-width="1.4"/><path d="M4 0.8V4H6.4V14.2Q6.4 15.4 8 15.4Q9.6 15.4 9.6 14.2V4H12V0.8" fill="#e8f4ff" stroke="#1f4f9f" stroke-width="1.3"/></svg>
<svg class="ic" style="left:235px;top:100px" viewBox="0 0 16 16"><rect x="1" y="5" width="1.6" height="6" fill="#5a8cc8"/><rect x="13.4" y="5" width="1.6" height="6" fill="#5a8cc8"/><rect x="2.4" y="1.4" width="4.2" height="13.4" fill="#2a6cb4" stroke="#1a4a8a" stroke-width=".6"/><rect x="9.4" y="1.4" width="4.2" height="13.4" fill="#2a7cb4" stroke="#1a4a8a" stroke-width=".6"/><rect x="6.6" y="1.8" width="2.8" height="12.6" fill="#fff"/><path d="M8 0.2V15.8" stroke="#d82838" stroke-width="1.2"/></svg>
<svg class="ic" style="left:258px;top:100px" viewBox="0 0 16 16"><path d="M5.6 1L2.4 1.6 1 3.4 3 5 2.4 7 4.4 8.4 3.4 10.2 5.800000000000001 10.8 6.6 13.2 8.6 15 10.8 14.6 11.6 12 13.4 12.6 15.4 14.6M5.4 3L7 2M13.8 9.6L15.4 9" stroke="#000" stroke-width="1.5" fill="none" stroke-linejoin="round"/><path d="M11.6 0.4V11M8.6 5.4H15.4M2 4.6L5.4 5.4M4 8.6L7 9.4" stroke="#e02020" stroke-width="1" stroke-dasharray="2 1.2"/></svg>
<svg class="ic" style="left:281px;top:100px" viewBox="0 0 16 16"><circle cx="8" cy="8" r="6.8" fill="#f4f0f0" stroke="#1e5c3c" stroke-width="1.5"/><path d="M8 0.2V5.6M8 10.4V15.8M0.2 8H5.6M10.4 8H15.8" stroke="#e02828" stroke-width="1.2"/><circle cx="8" cy="8" r="1.1" fill="#e02828"/></svg>
<svg class="ic" style="left:304px;top:100px" viewBox="0 0 16 16"><rect x="0" y="0" width="16" height="16" fill="#dcdad7"/><path d="M1.6 0.8H14.8L10.6 5.6H6Z" fill="#f4e0f4" stroke="#a01ca0" stroke-width="1.5" stroke-linejoin="round"/><path d="M6.4 1.8Q8.4 3.4 10.4 1.8" stroke="#a01ca0" stroke-width="1" fill="none"/><rect x="6.2" y="5.6" width="4.4" height="9.2" rx="1.4" fill="#fff" stroke="#a01ca0" stroke-width="1.4"/><path d="M6.4 7.8h4M6.4 9.9h4M6.4 12h4" stroke="#a01ca0" stroke-width="1.1"/></svg>
<svg class="ic" style="left:327px;top:100px" viewBox="0 0 16 16"><path d="M0.8 15.6V7.4Q1 5 4 4.2V0.8H13V4.2Q16 5 16.2 7.4V15.6" fill="#e2f0fc" stroke="#2a68b0" stroke-width="1.3"/><path d="M4 4.2H13M6.8 1V3.6M10 1V3.6M4.6 5Q6.2 9 6.2 15.4M12.4 5Q10.8 9 10.8 15.4" stroke="#2a68b0" stroke-width="1.1" fill="none"/></svg>
<svg class="ic" style="left:360px;top:100px" viewBox="0 0 16 16"><text x="8" y="13.6" font-size="15.5" fill="#e84848" font-family="Liberation Serif,Noto Serif CJK SC,Noto Sans CJK SC,serif" font-weight="600" text-anchor="middle" opacity=".9">库</text><path d="M16.3 10.8v5.5h-5.5z" fill="#000"/></svg>
<svg class="ic" style="left:383px;top:100px" viewBox="0 0 16 16"><rect x="0.8" y="0.8" width="14.6" height="14.6" fill="#fff" stroke="#000" stroke-width="1.6"/><path d="M0.8 4.3H15.4M0.8 7.4H15.4M0.8 10.4H15.4M0.8 13.3H15.4" stroke="#000" stroke-width="1"/><path d="M4.5 0.8V15.4M11.5 0.8V15.4" stroke="#000" stroke-width="1.3"/><path d="M13.7 4.3V15.4" stroke="#000" stroke-width=".9"/><path d="M5.6 5.9h5M5.6 8.9h5M5.6 11.9h5M5.6 14.3h5" stroke="#e038e0" stroke-width="1.5"/><path d="M12.3 5.9h1M12.3 8.9h1M12.3 11.9h1" stroke="#e038e0" stroke-width="1.4"/><path d="M1.8 5.9h2M1.8 8.9h2M1.8 11.9h2" stroke="#e02868" stroke-width="1.1"/><path d="M16.3 10.8v5.5h-5.5z" fill="#000"/></svg>
<svg class="ic" style="left:406px;top:100px" viewBox="0 0 16 16"><text x="8" y="13.6" font-size="15.5" fill="#3434d4" font-family="Liberation Serif,Noto Serif CJK SC,Noto Sans CJK SC,serif" font-weight="600" text-anchor="middle">塑</text><path d="M16.3 10.8v5.5h-5.5z" fill="#000"/></svg>
<svg class="ic" style="left:429px;top:100px" viewBox="0 0 16 16"><path d="M8 0.4V15.6M0.4 8H15.6" stroke="#e02020" stroke-width="1.15" stroke-dasharray="4.4 1.6 3.2 1.6"/><path d="M16.3 10.8v5.5h-5.5z" fill="#000"/></svg>
<svg class="ic" style="left:452px;top:100px" viewBox="0 0 16 16"><rect x="1.4" y="0.8" width="7" height="5" fill="#b8f060" stroke="#1a3a50" stroke-width="1.2"/><path d="M0.4 6.4L2 4.8V7.4Z" fill="#2060d0"/><circle cx="8.6" cy="8.4" r="3.6" fill="none" stroke="#801818" stroke-width="1.3"/><circle cx="10.4" cy="6.6" r="1.6" fill="#f0a020"/><path d="M8.4 4V15.6" stroke="#e82020" stroke-width="2"/><path d="M12 6.4Q14 4 13.6 1.2M11.6 3.6L14.8 4.8" stroke="#905030" stroke-width="1.4" fill="none"/><path d="M2.4 9V15" stroke="#f0b0b0" stroke-width="1.2"/><path d="M16.3 10.8v5.5h-5.5z" fill="#000"/></svg>
<svg class="ic" style="left:475px;top:100px" viewBox="0 0 16 16"><circle cx="8.2" cy="8.2" r="7.2" fill="#d8d6d6"/><path d="M8.8 1Q1 1.6 1 8.2Q1.4 15 8.2 15.4Q12.8 15.2 14.6 11.4" stroke="#3420d0" stroke-width="1.4" fill="none"/><path d="M9.2 1Q15.4 2 15.4 9" stroke="#e83050" stroke-width="1.5" fill="none" stroke-dasharray="2 1.3"/><path d="M16.3 10.8v5.5h-5.5z" fill="#000"/></svg>
<svg class="ic" style="left:498px;top:100px" viewBox="0 0 16 16"><path d="M3.6 15Q7.6 11 5.4 5.6L3.200000000000001 3" stroke="#3ca03c" stroke-width="1.3" fill="none"/><path d="M1 4.8L2.6 1.2 6.4 2.4" stroke="#3ca03c" stroke-width="1.3" fill="none"/><path d="M13 14.6Q8 10.6 11.4 5L13.4 2.6" stroke="#3ca03c" stroke-width="1.3" fill="none"/><path d="M10.6 1.8L14.6 1 15.2 5" stroke="#3ca03c" stroke-width="1.3" fill="none"/><path d="M16.3 10.8v5.5h-5.5z" fill="#000"/></svg>
<svg class="ic" style="left:521px;top:100px" viewBox="0 0 16 16"><rect x="0.8" y="0.8" width="14.4" height="10" rx="1" fill="#0e6c7c" stroke="#0a3a5a" stroke-width="1"/><rect x="10" y="1.6" width="4.6" height="8.4" fill="#1a3a7a"/><rect x="2.6" y="2.6" width="7.4" height="1.8" fill="#fff"/><path d="M2.8 6.2h10M2.8 8.4h10" stroke="#e8f8f8" stroke-width="1.2" stroke-dasharray="1.2 1"/><rect x="1" y="12.4" width="13.4" height="2.8" fill="#fff" stroke="#000" stroke-width="1.4"/><path d="M16.3 10.8v5.5h-5.5z" fill="#000"/></svg>
<svg class="ic" style="left:544px;top:100px" viewBox="0 0 16 16"><text x="8" y="13.6" font-size="15.5" fill="#e048e0" font-family="Liberation Serif,Noto Serif CJK SC,Noto Sans CJK SC,serif" font-weight="600" text-anchor="middle">词</text><path d="M16.3 10.8v5.5h-5.5z" fill="#000"/></svg>
<svg class="ic" style="left:577px;top:100px" viewBox="0 0 16 16"><path d="M8 9H15.6M7 11.2H15.6M6 13.4H15.6" stroke="#e85030" stroke-width="1.2"/><path d="M10.4 4L15.4 9" stroke="#f0b0a0" stroke-width="1"/><ellipse cx="7.4" cy="4" rx="1.7" ry="3.6" fill="#101878" transform="rotate(-8 7.4 4)"/><ellipse cx="7.8" cy="9.4" rx="1.3" ry="1.3" fill="#101878"/><ellipse cx="2.4" cy="9.2" rx="1.6" ry="3.4" fill="#101878" transform="rotate(10 2.4 9.2)"/><ellipse cx="2" cy="14.4" rx="1.2" ry="1.2" fill="#101878"/></svg>
<svg class="ic" style="left:600px;top:100px" viewBox="0 0 16 16"><rect x="0" y="0" width="16" height="16" fill="#dcdad7"/><defs><radialGradient id="bb" cx=".4" cy=".35"><stop offset="0" stop-color="#eef6ff"/><stop offset="1" stop-color="#8cb8e4"/></radialGradient><radialGradient id="by" cx=".5" cy=".4"><stop offset="0" stop-color="#ffffff"/><stop offset=".55" stop-color="#fcf8b0"/><stop offset="1" stop-color="#e8e060"/></radialGradient></defs><path d="M3.4000000000000004 5.8A4.6 4.6 0 1 1 12.6 5.8Q12.14 9.94 10.3 12.7H5.7Q3.8600000000000003 9.94 3.4000000000000004 5.8Z" fill="url(#bb)" stroke="#6890c0" stroke-width="1.1"/><path d="M5.7 13.899999999999999H10.3M6.390000000000001 15.299999999999999H9.61" stroke="#555" stroke-width="1.2"/></svg>
<svg class="ic" style="left:623px;top:100px" viewBox="0 0 16 16"><rect x="0" y="0" width="16" height="16" fill="#dcdad7"/><path d="M3.2 5.8A4.8 4.8 0 1 1 12.8 5.8Q12.32 10.120000000000001 10.4 13.0H5.6Q3.6799999999999997 10.120000000000001 3.2 5.8Z" fill="url(#by)" stroke="#c8c040" stroke-width="1.1"/><path d="M5.6 14.2H10.4M6.32 15.6H9.68" stroke="#555" stroke-width="1.2"/></svg>
<svg class="ic" style="left:646px;top:100px" viewBox="0 0 16 16"><rect x="0" y="0" width="7" height="16" fill="#dcdad6"/><path d="M0.3999999999999999 6.4A3.2 3.2 0 1 1 6.800000000000001 6.4Q6.48 9.280000000000001 5.2 11.200000000000001H2.0Q0.7199999999999998 9.280000000000001 0.3999999999999999 6.4Z" fill="#8cb4dc" stroke="#6088b8" stroke-width="1.1"/><path d="M2.0 12.4H5.2M2.4800000000000004 13.8H4.72" stroke="#555" stroke-width="1.2"/><path d="M8.8 6.4A3.2 3.2 0 1 1 15.2 6.4Q14.88 9.280000000000001 13.6 11.200000000000001H10.4Q9.12 9.280000000000001 8.8 6.4Z" fill="#f4e8a0" stroke="#c8b860" stroke-width="1.1"/><path d="M10.4 12.4H13.6M10.88 13.8H13.12" stroke="#555" stroke-width="1.2"/><path d="M7.6 0V16" stroke="#e04040" stroke-width="1.1"/></svg>
<svg class="ic" style="left:669px;top:100px" viewBox="0 0 16 16"><text x="0" y="14" font-size="16" fill="#161478" font-family="Liberation Serif,serif" stroke-width=".35" stroke="#161478" textLength="9.6" lengthAdjust="spacingAndGlyphs">A</text><path d="M8.4 5.8A3.6 3.6 0 1 1 15.6 5.8Q15.24 9.04 13.8 11.2H10.2Q8.76 9.04 8.4 5.8Z" fill="#fce8d8" stroke="#d8b050" stroke-width="1.1"/><path d="M10.2 12.399999999999999H13.8M10.74 13.799999999999999H13.26" stroke="#555" stroke-width="1.2"/></svg>
<svg class="ic" style="left:692px;top:100px" viewBox="0 0 16 16"><rect x="0" y="0" width="16" height="16" fill="#dcdad7"/><path d="M5.4 7V4Q5.4 0.8 8 0.8Q10.6 0.8 10.6 4V7" fill="none" stroke="#4878c8" stroke-width="1.6"/><rect x="4.0" y="6.4" width="8" height="8.4" rx="2" fill="#cfe0f8" stroke="#4878c8" stroke-width="1.1"/><path d="M5.2 9.4h5.6M5.2 11.8h5.6" stroke="#4878c8" stroke-width=".8" opacity=".7"/></svg>
<svg class="ic" style="left:715px;top:100px" viewBox="0 0 16 16"><rect x="0" y="0" width="16" height="16" fill="#dcdad7"/><path d="M4.0 6V3.6Q4.0 0.8 6.6000000000000005 0.8Q9.200000000000001 0.8 9.200000000000001 3.6V7" fill="none" stroke="#b8a808" stroke-width="1.6"/><rect x="6.6000000000000005" y="6.4" width="7.6" height="8.4" rx="2" fill="#ece42c" stroke="#b8a808" stroke-width="1.1"/><path d="M7.800000000000001 9.4h5.199999999999999M7.800000000000001 11.8h5.199999999999999" stroke="#b8a808" stroke-width=".8" opacity=".7"/></svg>
<svg class="ic" style="left:738px;top:100px" viewBox="0 0 16 16"><rect x="0" y="0" width="6.6" height="16" fill="#dcdad6"/><path d="M1.0 7V4Q1.0 0.8 3.6 0.8Q6.2 0.8 6.2 4V7" fill="none" stroke="#4878a8" stroke-width="1.6"/><rect x="0.8999999999999999" y="6.4" width="5.4" height="8.4" rx="2" fill="#a8dce8" stroke="#4878a8" stroke-width="1.1"/><path d="M2.0999999999999996 9.4h3.0000000000000004M2.0999999999999996 11.8h3.0000000000000004" stroke="#4878a8" stroke-width=".8" opacity=".7"/><path d="M9.6 7V4Q9.6 0.8 12.2 0.8Q14.799999999999999 0.8 14.799999999999999 4V7" fill="none" stroke="#b8a020" stroke-width="1.6"/><rect x="9.399999999999999" y="6.4" width="5.6" height="8.4" rx="2" fill="#ece048" stroke="#b8a020" stroke-width="1.1"/><path d="M10.599999999999998 9.4h3.1999999999999997M10.599999999999998 11.8h3.1999999999999997" stroke="#b8a020" stroke-width=".8" opacity=".7"/><path d="M7.4 0V16" stroke="#e04040" stroke-width="1.1"/></svg>
<svg class="ic" style="left:761px;top:100px" viewBox="0 0 16 16"><text x="0" y="14" font-size="16" fill="#161478" font-family="Liberation Serif,serif" stroke-width=".35" stroke="#161478">S</text><path d="M9.8 7V4Q9.8 0.8 12.4 0.8Q15.0 0.8 15.0 4V7" fill="none" stroke="#c0a020" stroke-width="1.6"/><rect x="9.600000000000001" y="6.4" width="5.6" height="8.4" rx="2" fill="#ecd850" stroke="#c0a020" stroke-width="1.1"/><path d="M10.8 9.4h3.1999999999999997M10.8 11.8h3.1999999999999997" stroke="#c0a020" stroke-width=".8" opacity=".7"/></svg>
<svg class="ic" style="left:784px;top:100px" viewBox="0 0 16 16"><text x="0" y="14" font-size="16" fill="#161478" font-family="Liberation Serif,serif" stroke-width=".35" stroke="#161478" textLength="9.6" lengthAdjust="spacingAndGlyphs">A</text><path d="M9.8 7V4Q9.8 0.8 12.4 0.8Q15.0 0.8 15.0 4V7" fill="none" stroke="#c89818" stroke-width="1.6"/><rect x="9.600000000000001" y="6.4" width="5.6" height="8.4" rx="2" fill="#f0c040" stroke="#c89818" stroke-width="1.1"/><path d="M10.8 9.4h3.1999999999999997M10.8 11.8h3.1999999999999997" stroke="#c89818" stroke-width=".8" opacity=".7"/></svg>
<svg class="ic" style="left:807px;top:100px" viewBox="0 0 16 16"><rect x="0" y="0" width="16" height="16" fill="#dcdad7"/><circle cx="8" cy="8" r="3.6" fill="#f4f6ff" stroke="#6878c8" stroke-width="1.2" stroke-dasharray="1.6 1"/><g fill="#3c50b4"><circle cx="8" cy="1.6" r=".8"/><circle cx="8" cy="14.4" r=".8"/><circle cx="1.8" cy="8" r="1"/><circle cx="14.2" cy="8" r="1"/><circle cx="3.4" cy="3.4" r=".7"/><circle cx="12.6" cy="3.4" r=".7"/><circle cx="3.4" cy="12.6" r=".7"/><circle cx="12.6" cy="12.6" r=".7"/></g><path d="M6.8 7.2Q8 6 9.2 7.2M6.8 9Q8 10 9.2 9" stroke="#6878c8" stroke-width=".8" fill="none"/></svg>
<svg class="ic" style="left:830px;top:100px" viewBox="0 0 16 16"><defs><radialGradient id="sy" cx=".5" cy=".5"><stop offset="0" stop-color="#fcd838"/><stop offset="1" stop-color="#f8f020"/></radialGradient></defs><circle cx="8" cy="8.4" r="6.4" fill="url(#sy)" stroke="#8c9c20" stroke-width="1.2"/></svg>
<svg class="ic" style="left:853px;top:100px" viewBox="0 0 16 16"><rect x="0" y="0" width="7" height="16" fill="#dcd8d6"/><g transform="translate(-0.6 2.4) scale(.62)"><circle cx="8" cy="8" r="3.6" fill="#f4f6ff" stroke="#6878c8" stroke-width="1.2" stroke-dasharray="1.6 1"/><g fill="#3c50b4"><circle cx="8" cy="1.6" r=".8"/><circle cx="8" cy="14.4" r=".8"/><circle cx="1.8" cy="8" r="1"/><circle cx="14.2" cy="8" r="1"/><circle cx="3.4" cy="3.4" r=".7"/><circle cx="12.6" cy="3.4" r=".7"/><circle cx="3.4" cy="12.6" r=".7"/><circle cx="12.6" cy="12.6" r=".7"/></g><path d="M6.8 7.2Q8 6 9.2 7.2M6.8 9Q8 10 9.2 9" stroke="#6878c8" stroke-width=".8" fill="none"/></g><circle cx="11.8" cy="8.2" r="4" fill="#f4e430" stroke="#a0a030" stroke-width="1"/><path d="M7.4 0V16" stroke="#e05030" stroke-width="1.1"/></svg>
<svg class="ic" style="left:876px;top:100px" viewBox="0 0 16 16"><text x="0" y="14" font-size="16" fill="#161478" font-family="Liberation Serif,serif" stroke-width=".35" stroke="#161478" textLength="9.6" lengthAdjust="spacingAndGlyphs">A</text><circle cx="12.2" cy="8.2" r="4.3" fill="#f4e830" stroke="#c0b840" stroke-width=".9"/></svg>
<svg class="ic" style="left:899px;top:100px" viewBox="0 0 16 16"><rect x="0" y="1" width="14" height="14" fill="#e4e2de"/><path d="M2.4 2.6H11L14.4 6.2H5.6Z" fill="#108078"/><path d="M1.4 6.2H14.4L14.6 8.4H3.6Z" fill="#28a040"/><path d="M3.6 8.4H14.6L13.6 10.6H5Z" fill="#f0e020"/><path d="M5 10.6H13.6L12 13H6.8Z" fill="#e02818"/><path d="M0.8 4.2L1.6 7.6 5.4 12.2M14.6 7.4V9" stroke="#000" stroke-width="1.1" fill="none" stroke-dasharray="1.6 1"/></svg>
<svg class="ic" style="left:922px;top:100px" viewBox="0 0 16 16"><text x="8" y="7.6" font-size="10" fill="#b868b8" font-family="Liberation Serif,serif" font-weight="bold" text-anchor="middle" textLength="15.4" lengthAdjust="spacingAndGlyphs">ALL</text><text x="8" y="15" font-size="10.5" fill="#68a868" font-family="Liberation Serif,serif" text-anchor="middle" textLength="15.4" lengthAdjust="spacingAndGlyphs">dim</text></svg>
<svg class="ic" style="left:5px;top:127px" viewBox="0 0 16 16"><text x="0.6" y="9.6" font-size="7.4" fill="#000" font-family="Liberation Sans,sans-serif" font-weight="bold">1</text><text x="5.8" y="6.6" font-size="7.4" fill="#000" font-family="Liberation Sans,sans-serif" font-weight="bold">2</text><text x="11.6" y="4.4" font-size="7.4" fill="#181868" font-family="Liberation Sans,sans-serif" font-weight="bold">3</text><path d="M2.4 10.6V16M7.4 8V14.6" stroke="#e82870" stroke-width="1.1" stroke-dasharray="2 1.2"/><path d="M13.4 5.6V11.4" stroke="#9838d0" stroke-width="1.1" stroke-dasharray="2 1.2"/><rect x="10.6" y="9" width="5" height="7" fill="#e4dcc8" opacity=".7"/></svg>
<svg class="ic" style="left:28px;top:127px" viewBox="0 0 16 16"><rect x="0" y="0" width="14" height="16" fill="#d6d4d0"/><text x="8.6" y="6.8" font-size="9" fill="#f028c8" font-family="Liberation Sans,sans-serif" stroke="#f028c8" stroke-width=".3">X</text><text x="8.8" y="16" font-size="9" fill="#f028c8" font-family="Liberation Sans,sans-serif" stroke="#f028c8" stroke-width=".3">Y</text><path d="M15.8 7.6H7L1.6 14.4" stroke="#1818e0" stroke-width="1.5" fill="none"/><path d="M0.2 16L0.8 11.2 5 14.8Z" fill="#1818e0"/></svg>
<svg class="ic" style="left:51px;top:127px" viewBox="0 0 16 16"><rect x="1" y="7" width="14" height="9" fill="#dcdad8"/><ellipse cx="8.6" cy="3.8" rx="4" ry="3.5" fill="#a4d0f6" stroke="#2e78cc" stroke-width="1.1"/><path d="M5.199999999999999 0.5999999999999996L12.0 7.0" stroke="#1858b0" stroke-width="1.1"/><path d="M0.8 5.800000000000001V15.0M15.2 5.800000000000001V15.0M0.8 10.4H15.2" stroke="#000" stroke-width="1.5" fill="none"/><path d="M1.2000000000000002 10.4l3.2 -1.9v3.8zM14.799999999999999 10.4l-3.2 -1.9v3.8z" fill="#000"/></svg>
<svg class="ic" style="left:74px;top:127px" viewBox="0 0 16 16"><rect x="0" y="0" width="16" height="16" fill="#dcdad7"/><ellipse cx="10.4" cy="4.4" rx="4" ry="3.5" fill="#a4d0f6" stroke="#2e78cc" stroke-width="1.1"/><path d="M7.0 1.2000000000000002L13.8 7.6000000000000005" stroke="#1858b0" stroke-width="1.1"/><g transform="rotate(42 8 9)"><path d="M-0.4 7.800000000000001V13.0M15.4 7.800000000000001V13.0M-0.4 10.4H15.4" stroke="#000" stroke-width="1.6" fill="none"/><path d="M0.0 10.4l3.2 -1.9v3.8zM15.0 10.4l-3.2 -1.9v3.8z" fill="#000"/></g></svg>
<svg class="ic" style="left:97px;top:127px" viewBox="0 0 16 16"><rect x="0" y="2" width="16" height="13" fill="#e0dedc"/><circle cx="4.6" cy="11.2" r="4" fill="#fff" stroke="#000" stroke-width="1.5"/><path d="M3 14.4L6.2 8M1 2L4 7M2.6 5.2L4.4 3.4" stroke="#000" stroke-width="1.2"/><circle cx="12" cy="3.6" r="3.2" fill="#fff" stroke="#000" stroke-width="1.4"/><path d="M12.6 7V14.6M11 10L12.6 8 14.4 10M11.4 8.4H14" stroke="#000" stroke-width="1.2" fill="none"/></svg>
<svg class="ic" style="left:120px;top:127px" viewBox="0 0 16 16"><rect x="0" y="0" width="16" height="16" fill="#dcdad7"/><circle cx="7.2" cy="8.8" r="6" fill="#dedcda" stroke="#555" stroke-width="1.3"/><path d="M1.2 2.4L10 13M15.4 0.6L11 5" stroke="#222" stroke-width="1.2"/><path d="M10.8 14L7.4 12.6 9.8 10.6Z" fill="#222"/><path d="M11.4 2.6L13.8 5" stroke="#222" stroke-width="1.2"/></svg>
<svg class="ic" style="left:153px;top:127px" viewBox="0 0 16 16"><rect x="0.8" y="0.8" width="14.6" height="14.6" fill="#fff" stroke="#000" stroke-width="1.6"/><path d="M0.8 4.3H15.4M0.8 7.4H15.4M0.8 10.4H15.4M0.8 13.3H15.4" stroke="#000" stroke-width="1"/><path d="M4.5 0.8V15.4M11.5 0.8V15.4" stroke="#000" stroke-width="1.3"/><path d="M13.7 4.3V15.4" stroke="#000" stroke-width=".9"/><path d="M5.6 5.9h5M5.6 8.9h5M5.6 11.9h5M5.6 14.3h5" stroke="#e038e0" stroke-width="1.5"/><path d="M12.3 5.9h1M12.3 8.9h1M12.3 11.9h1" stroke="#e038e0" stroke-width="1.4"/><path d="M1.8 5.9h2M1.8 8.9h2M1.8 11.9h2" stroke="#e02868" stroke-width="1.1"/></svg>
<svg class="ic" style="left:176px;top:127px" viewBox="0 0 16 16"><circle cx="10.2" cy="6" r="5.4" fill="#f4f4ff" stroke="#2020c8" stroke-width="1.4"/><text x="10.2" y="9.2" font-size="9" fill="#2020c8" font-family="Liberation Serif,serif" font-weight="bold" text-anchor="middle">2</text><path d="M6.2 10L1.6 14.6" stroke="#2020c8" stroke-width="1.5"/><circle cx="1.6" cy="14.6" r="1.5" fill="#1818d8"/></svg>
<svg class="ic" style="left:199px;top:127px" viewBox="0 0 16 16"><defs><linearGradient id="gq" x1="0" y1="0" x2="0" y2="1"><stop offset="0" stop-color="#2c78d0"/><stop offset="1" stop-color="#d8ecfc"/></linearGradient></defs><circle cx="10" cy="5.6" r="5.2" fill="#f0f0f0" stroke="#707880" stroke-width="1.1"/><rect x="0.8" y="5.4" width="10" height="10" fill="url(#gq)" stroke="#4870a0" stroke-width="1"/><path d="M4.8 5.4H10.8V11.2H8.4Z" fill="#f00808"/></svg>
<svg class="ic" style="left:222px;top:127px" viewBox="0 0 16 16"><rect x="0.8" y="2.6" width="3.4" height="5" rx="1" fill="#f4fcff" stroke="#10708c" stroke-width="1.2"/><rect x="0.8" y="8" width="3.4" height="5.2" rx="1" fill="#f4fcff" stroke="#10708c" stroke-width="1.2"/><rect x="11.8" y="2.6" width="3.4" height="5" rx="1" fill="#f4fcff" stroke="#10708c" stroke-width="1.2"/><rect x="11.8" y="8" width="3.4" height="5.2" rx="1" fill="#f4fcff" stroke="#10708c" stroke-width="1.2"/><path d="M6.2 2.6L9.8 13.4M9.8 2.6L6.2 13.4" stroke="#f030e0" stroke-width="2"/></svg>
<svg class="ic" style="left:245px;top:127px" viewBox="0 0 16 16"><path d="M0.4 1.6H3.2M0.4 5.6H3.2M0.4 9.6H3.2M0.4 13.6H3.2" stroke="#000" stroke-width="1.9"/><path d="M6 1.6H12M6 5.6H16M6 9.6H13.6M6 13.6H16" stroke="#000" stroke-width="1.9"/><rect x="12" y="0.4" width="3.6" height="2.6" fill="#d8d6d2"/></svg>
<svg class="ic" style="left:268px;top:127px" viewBox="0 0 16 16"><rect x="0.8" y="2.4" width="14.4" height="10.8" rx="1.6" fill="#fff" stroke="#e01818" stroke-width="1.5"/><text x="8" y="11.6" font-size="10" fill="#2030c8" font-family="Liberation Serif,serif" font-weight="bold" text-anchor="middle" textLength="10.6" lengthAdjust="spacingAndGlyphs">A2</text></svg>
<svg class="ic" style="left:291px;top:127px" viewBox="0 0 16 16"><path d="M4.6 11.2L8.4 6.4" stroke="#e83040" stroke-width="1.6"/><circle cx="10.8" cy="4.8" r="4.4" fill="#d8ecf8" stroke="#2868b8" stroke-width="1.3"/><circle cx="3.4" cy="12.8" r="2.8" fill="#e0f0fc" stroke="#2868b8" stroke-width="1.3"/></svg>
<svg class="ic" style="left:314px;top:127px" viewBox="0 0 16 16"><path d="M1.6 5L8.8 1 15 4.2 7.6 8.4Z" fill="#d4ecfc" stroke="#1a5ab0" stroke-width="1.5" stroke-linejoin="round"/><path d="M0.8 7.4L7 11V15.6L0.8 12Z" fill="#d4ecfc" stroke="#1a5ab0" stroke-width="1.5" stroke-linejoin="round"/><path d="M9 11L15.4 7.4V12L9 15.6Z" fill="#d4ecfc" stroke="#1a5ab0" stroke-width="1.5" stroke-linejoin="round"/></svg>
<svg class="ic" style="left:337px;top:127px" viewBox="0 0 16 16"><text x="0.6" y="7.6" font-size="8.4" fill="#2838d0" font-family="Liberation Serif,Noto Serif CJK SC,Noto Sans CJK SC,serif" font-weight="bold">分</text><text x="6.6" y="15" font-size="8.4" fill="#2838d0" font-family="Liberation Serif,Noto Serif CJK SC,Noto Sans CJK SC,serif" font-weight="bold">层</text></svg>
<svg class="ic" style="left:360px;top:127px" viewBox="0 0 16 16"><circle cx="8" cy="10.4" r="5.4" fill="#f8ecec" stroke="#c03028" stroke-width="1.4"/><path d="M0.8 0.8H15.2L10 5.6H6Z" fill="#eefcfc" stroke="#18808c" stroke-width="1.4" stroke-linejoin="round"/><path d="M3.6 14.4L12.4 5.4M6.4 15.4L9 12.6" stroke="#2828c0" stroke-width="1.5"/><path d="M4.6 8.2Q8 5.8 11.4 8.2" stroke="#902020" stroke-width="1" fill="none"/></svg>
<svg class="ic" style="left:383px;top:127px" viewBox="0 0 16 16"><rect x="0.8" y="1.4" width="14.6" height="13.8" fill="#fff" stroke="#000" stroke-width="1.6"/><path d="M7.6 1.4V15.2M0.8 8.3H15.4" stroke="#000" stroke-width="1.5"/><rect x="1.8" y="2.4" width="4.8" height="5" fill="#c07848"/><rect x="1.8" y="9.4" width="4.8" height="5" fill="#c07848"/><rect x="3.2" y="4" width="1.8" height="1.8" fill="#fff"/><rect x="3.2" y="11" width="1.8" height="1.8" fill="#fff"/><rect x="9.4" y="3.8" width="4.6" height="2" fill="#1010a8"/><rect x="9.4" y="10.8" width="4.6" height="2" fill="#1010a8"/></svg>
<svg class="ic" style="left:406px;top:127px" viewBox="0 0 16 16"><rect x="0.8" y="2.6" width="14.6" height="10" fill="#f0e8fc" stroke="#1860b0" stroke-width="1.4"/><path d="M7.8 2.6V12.6" stroke="#1840a0" stroke-width="1.8"/><path d="M2 4L6.400000000000001 11.4M6.4 4L2 11.4" stroke="#e020d0" stroke-width="1.5"/><path d="M9.8 4L12 7.6 14.2 4M12 7.6V11.6" stroke="#e020d0" stroke-width="1.8" fill="none"/></svg>
<svg class="ic" style="left:429px;top:127px" viewBox="0 0 16 16"><rect x="11" y="6" width="5" height="10" fill="#d8d6d4"/><rect x="0.8" y="1.2" width="5.6" height="2.8" fill="#fff" stroke="#d87080" stroke-width="1.3"/><rect x="11.6" y="0.8" width="3.6" height="7.4" fill="#fff" stroke="#c86878" stroke-width="1.3"/><circle cx="4.2" cy="11.2" r="3.8" fill="#f4f0f0" stroke="#c86070" stroke-width="1.4"/></svg>
<svg class="ic" style="left:452px;top:127px" viewBox="0 0 16 16"><rect x="4" y="4.6" width="12" height="11.4" fill="#c8dcf0"/><path d="M3.6 12Q-1 6.400000000000001 3.6 2.6Q8 -0.4 11.8 4" stroke="#e81828" stroke-width="1.5" fill="none"/><path d="M3.8 15.8V4.6H15.8" stroke="#000" stroke-width="1.6" fill="none"/></svg>
<svg class="ic" style="left:485px;top:127px" viewBox="0 0 16 16"><rect x="1" y="3" width="14" height="13" fill="#d6d4d0"/><path d="M0.8 0.39999999999999947V15.8M15.2 0.39999999999999947V8.8M0.8 4.6H15.2" stroke="#000" stroke-width="1.5" fill="none"/><path d="M1.2000000000000002 4.6l3.2 -1.9v3.8zM14.799999999999999 4.6l-3.2 -1.9v3.8z" fill="#000"/><path d="M16.3 10.8v5.5h-5.5z" fill="#000"/></svg>
<svg class="ic" style="left:508px;top:127px" viewBox="0 0 16 16"><rect x="0.8" y="0.8" width="14.6" height="14.6" fill="#fff" stroke="#2878a0" stroke-width="1.2"/><text x="1.4" y="13.6" font-size="14.5" fill="#e83848" font-family="Liberation Sans,sans-serif" textLength="7.6" lengthAdjust="spacingAndGlyphs">A</text><path d="M9.6 2.6H14.4M9.6 12.6H14.4M12 2.6V12.6" stroke="#000" stroke-width="1.4"/><path d="M12 3.4L10.4 6H13.6ZM12 11.8L10.4 9.2H13.6Z" fill="#000"/><path d="M16.3 10.8v5.5h-5.5z" fill="#000"/></svg>
<svg class="ic" style="left:531px;top:127px" viewBox="0 0 16 16"><path d="M0.8 0.6V15.4M15.2 0.6V15.4M0.8 2.8H15.2" stroke="#000" stroke-width="1.4" fill="none"/><path d="M1.2 2.8l3-1.7v3.4zM14.8 2.8l-3-1.7v3.4z" fill="#000"/><path d="M2.4 10H13.6M6 6.4L1.8 10 6 13.6M10 6.4L14.2 10 10 13.6" stroke="#f01818" stroke-width="1.5" fill="none"/><path d="M16.3 10.8v5.5h-5.5z" fill="#000"/></svg>
<svg class="ic" style="left:554px;top:127px" viewBox="0 0 16 16"><path d="M2 14.2V1.6M8 8V0.5" stroke="#2c58c0" stroke-width="1.4"/><path d="M2 0L0.2 3.4H3.8Z" fill="#2c58c0"/><path d="M2 14.2H14M8 9.4H15" stroke="#1c3c90" stroke-width="1.2"/><path d="M15.8 14.2L12.4 12.4V16Z" fill="#2c58c0"/><path d="M0.6 7L6.4 14.6 15 0.6" stroke="#d84ae2" stroke-width="2.1" fill="none"/><rect x="0.8" y="12" width="3" height="3" fill="#fff" stroke="#000" stroke-width="1.1"/><rect x="7.8" y="8.200000000000001" width="2.8" height="2.8" fill="#fff" stroke="#000" stroke-width="1.1"/><path d="M16.3 10.8v5.5h-5.5z" fill="#000"/></svg>
<svg class="ic" style="left:577px;top:127px" viewBox="0 0 16 16"><rect x="0.6" y="0" width="15" height="16" fill="#d6d4d0"/><path d="M5.6 0.4L1.8 3.4 5.6 6.4M10.4 0.4L14.2 3.4 10.4 6.4" stroke="#2868d0" stroke-width="1.4" fill="none"/><path d="M0.8 6.0V15.2M15.2 6.0V15.2M0.8 10.6H15.2" stroke="#000" stroke-width="1.5" fill="none"/><path d="M1.2000000000000002 10.6l3.2 -1.9v3.8zM14.799999999999999 10.6l-3.2 -1.9v3.8z" fill="#000"/><path d="M16.3 10.8v5.5h-5.5z" fill="#000"/></svg>
<svg class="abs" style="left:0;top:153px" width="1112" height="656" viewBox="0 153 1112 656">

<g fill="none" stroke-width="1">
<!-- left figure (2px higher than right one) -->
<g transform="translate(-1 -2)">
<circle cx="-88.3" cy="461.2" r="203.5" fill="#00ff00" stroke="#dcffd4" stroke-width="1"/>
<path d="M137.4 328.3 A152.5 152.5 0 0 0 -9 333.5 L-10 610 L0 597.3 A105.8 105.8 0 0 0 16.5 540.6 A332 332 0 0 1 137.4 328.3 Z" fill="#ffff00" stroke="#ffffd0" stroke-width="1"/>
<path d="M0 328.5H136.5M0 461.5H136.5M0 540.5H136.5" stroke="#e00808"/>
</g>
<!-- right figure -->
<g stroke="#f4f4f4" stroke-width="1.1">
<circle cx="592.7" cy="461.2" r="203.5"/>
<path d="M366 328.8 A148.4 148.4 0 0 1 581.5 461.2 L581.5 645.9"/>
<path d="M486.3 540.6 A105.8 105.8 0 0 0 581.5 645.9"/>
</g>
<g stroke="#40dcd6">
<path d="M433.5 236V383M433.5 434V487M433.5 538V686M581.5 236V257"/>
</g>
<g stroke="#d81c24">
<path d="M593 236V383M593 434V487M593 538V686" stroke-width="1.5"/>
<path d="M366 328.5H514M565 328.5H618.5M669 328.5H816"/>
<path d="M368 461.5H515M566 461.5H618.5M669 461.5H797"/>
</g>
<g stroke="#2fd62f">
<path d="M368 540.5H515M566 540.5H618.5M669 540.5H817"/>
<path d="M368 646.5H515M566 646.5H618.5M669 646.5H817"/>
</g>
<g stroke="#b8f2ee">
<path d="M821 328.5H846M798 461.5H846"/>
</g>
<g stroke="#ffffff">
<path d="M820 646.5H835" stroke="#d8f8f8"/>
<path d="M842.5 329V381M842.5 408V461"/>
<path d="M830.5 462V537M830.5 567V646"/>
<path d="M799.5 541V577M799.5 608V646"/>
<path d="M558 577.5H581M592 577.5H616"/>
</g>
<g fill="#ffffff" stroke="none">
<path d="M842.5 329l-2.4 11.5h4.8zM842.5 461l-2.4 -11.5h4.8z"/>
<path d="M830.5 462l-2.4 11.5h4.8zM830.5 646l-2.4 -11.5h4.8z"/>
<path d="M799.5 541l-2.4 11.5h4.8zM799.5 646l-2.4 -11.5h4.8z"/>
<path d="M581.5 577.5l-11.5 -2.4v4.8zM592 577.5l11.5 -2.4v4.8z"/>
</g>
<path d="M694.5 568l11.6 0.6l-1.6 4.4zM705 571L716.5 574" fill="#3fd23f" stroke="#3fd23f" stroke-width="1"/>
<g fill="#2a2608" stroke="#d8c45a" stroke-width="0.8" font-family="Liberation Serif, serif" font-size="23">
<text x="618.5" y="585.5">2</text>
<text transform="translate(850,394.5) rotate(-90)" text-anchor="middle">25</text>
<text transform="translate(838,553) rotate(-90)" text-anchor="middle">35</text>
<text transform="translate(807,593.5) rotate(-90)" text-anchor="middle">20</text>
<text transform="translate(714.5,583.5) rotate(15)">R20</text>
</g>
</g>

</svg>
<div class="abs" style="left:919px;top:753px;font-size:27px;line-height:34px;color:#fff;white-space:nowrap;text-shadow:1px 1px 2px rgba(70,70,70,.8)"><b style="font-weight:900;letter-spacing:1px">头条</b><span style="margin-left:7px;font-weight:400;letter-spacing:2.8px">@UG网</span></div>
</div></body></html>
